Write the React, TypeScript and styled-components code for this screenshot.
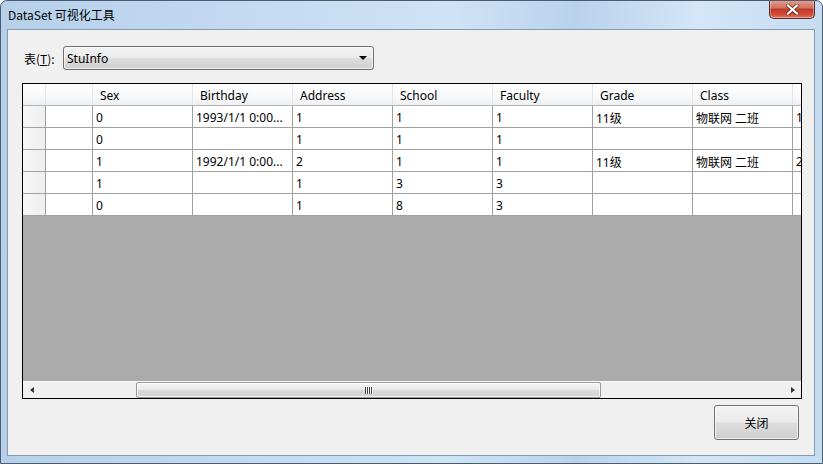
import React from "react";
import styled, { createGlobalStyle } from "styled-components";

const Global = createGlobalStyle`
  html, body { margin: 0; padding: 0; width: 823px; height: 464px; overflow: hidden; background: #fff; }
  * { box-sizing: border-box; }
  body { font-family: "Noto Sans", "Noto Sans CJK SC", sans-serif; font-size: 12px; color: #000; }
`;

const Window = styled.div`
  width: 823px;
  height: 464px;
  display: flex;
  flex-direction: column;
  border: 1px solid #4a5c72;
  border-radius: 7px 7px 0 0;
  background: linear-gradient(90deg, #b7d0ea 0%, #c3daf1 30%, #cfe3f6 55%, #b9d2ec 70%, #d4e6f7 85%, #c5dcf2 100%);
  overflow: hidden;
`;

const TitleBar = styled.div`
  height: 28px;
  display: flex;
  align-items: flex-start;
  padding-left: 7px;
  padding-right: 7px;
`;

const Title = styled.div`
  margin-top: 6px;
  font-family: "Noto Sans CJK SC", sans-serif;
  font-size: 12px;
  line-height: 16px;
  color: #000;
`;

const CloseBtn = styled.div`
  margin-left: auto;
  width: 46px;
  height: 19px;
  margin-top: -1px;
  border: 1px solid #5b2a25;
  border-top: none;
  border-radius: 0 0 5px 5px;
  background: linear-gradient(180deg, #e8a190 0%, #d0705e 45%, #bf3b28 50%, #d14a36 80%, #e07a62 100%);
  display: flex;
  align-items: center;
  justify-content: center;
  box-shadow: inset 0 0 0 1px rgba(255, 255, 255, 0.35);
`;

const Client = styled.div`
  flex: 1;
  margin: 0 7px 7px 6px;
  border: 1px solid #8799ad;
  background: #f0f0f0;
  display: flex;
  flex-direction: column;
  padding: 16px 0 0 14px;
`;

const TopRow = styled.div`
  display: flex;
  align-items: center;
  height: 24px;
`;

const Label = styled.label`
  margin-left: 2px;
  width: 39px;
  font-family: "Noto Sans CJK SC", sans-serif;
  font-size: 12px;
`;

const Combo = styled.div`
  width: 311px;
  height: 24px;
  border: 1px solid #707070;
  border-radius: 3px;
  background: linear-gradient(180deg, #f2f2f2 0%, #ebebeb 48%, #dddddd 52%, #cfcfcf 100%);
  display: flex;
  align-items: center;
  padding: 0 6px 0 3px;
  box-shadow: inset 0 0 0 1px rgba(255, 255, 255, 0.6);
`;

const ComboText = styled.span`
  flex: 1;
  font-size: 12px;
`;

const Arrow = styled.span`
  width: 0;
  height: 0;
  border-left: 4px solid transparent;
  border-right: 4px solid transparent;
  border-top: 4px solid #000;
`;

const Grid = styled.div`
  margin-top: 13px;
  width: 780px;
  height: 316px;
  border: 1px solid #000;
  background: #ababab;
  display: flex;
  flex-direction: column;
  overflow: hidden;
`;

const Row = styled.div<{ $header?: boolean }>`
  display: flex;
  height: 22px;
  flex: none;
  background: ${(p) => (p.$header ? "linear-gradient(180deg, #ffffff 0%, #f7f8fa 60%, #eef0f3 100%)" : "#fff")};
  border-bottom: 1px solid ${(p) => (p.$header ? "#b5b5b5" : "#a0a0a0")};
`;

const RowHead = styled.div<{ $header?: boolean }>`
  width: 23px;
  flex: none;
  background: ${(p) => (p.$header ? "transparent" : "linear-gradient(90deg, #f7f7f7 0%, #eeeeee 100%)")};
  border-right: 1px solid ${(p) => (p.$header ? "#e2e2e2" : "#a0a0a0")};
`;

const Cell = styled.div<{ $w: number; $header?: boolean }>`
  width: ${(p) => p.$w}px;
  flex: none;
  border-right: 1px solid ${(p) => (p.$header ? "#e4e4e4" : "#a0a0a0")};
  padding-left: ${(p) => (p.$header ? 7 : 3)}px;
  padding-top: 2px;
  display: flex;
  align-items: center;
  white-space: nowrap;
  overflow: hidden;
  font-size: 12px;
  color: #000;
`;

const Empty = styled.div`
  flex: 1;
  background: #ababab;
`;

const HScroll = styled.div`
  height: 17px;
  flex: none;
  background: #f0f0f0;
  border-top: 1px solid #fafafa;
  display: flex;
  align-items: center;
`;

const ScrollArrow = styled.div<{ $dir: "left" | "right" }>`
  width: 17px;
  height: 17px;
  display: flex;
  align-items: center;
  justify-content: center;
  &::before {
    content: "";
    width: 0;
    height: 0;
    border-top: 3.5px solid transparent;
    border-bottom: 3.5px solid transparent;
    ${(p) => (p.$dir === "left" ? "border-right: 4px solid #333;" : "border-left: 4px solid #333;")}
  }
`;

const Track = styled.div`
  flex: 1;
  height: 17px;
  display: flex;
  align-items: center;
  padding-left: 96px;
`;

const Thumb = styled.div`
  width: 465px;
  height: 16px;
  border: 1px solid #9a9a9a;
  border-radius: 2px;
  background: linear-gradient(180deg, #f4f4f4 0%, #e8e8e8 50%, #d9d9d9 51%, #d2d2d2 100%);
  display: flex;
  align-items: center;
  justify-content: center;
  box-shadow: inset 0 0 0 1px rgba(255, 255, 255, 0.7);
`;

const Grip = styled.div`
  display: flex;
  gap: 1px;
  span {
    width: 1px;
    height: 7px;
    background: #444;
    box-shadow: 1px 0 0 #fff;
  }
`;

const Footer = styled.div`
  display: flex;
  justify-content: flex-end;
  padding-right: 15px;
  margin-top: 6px;
`;

const Button = styled.button`
  width: 85px;
  height: 35px;
  border: 1px solid #707070;
  border-radius: 3px;
  background: linear-gradient(180deg, #f2f2f2 0%, #ebebeb 48%, #dddddd 52%, #cfcfcf 100%);
  box-shadow: inset 0 0 0 1px rgba(255, 255, 255, 0.7);
  font-family: "Noto Sans CJK SC", sans-serif;
  font-size: 12px;
  color: #000;
  padding: 0;
`;

const widths = [47, 100, 100, 100, 100, 100, 100, 100, 100];
const headers = ["", "Sex", "Birthday", "Address", "School", "Faculty", "Grade", "Class", ""];
const rows = [
  ["", "0", "1993/1/1 0:00...", "1", "1", "1", "11级", "物联网 二班", "1"],
  ["", "0", "", "1", "1", "1", "", "", ""],
  ["", "1", "1992/1/1 0:00...", "2", "1", "1", "11级", "物联网 二班", "2"],
  ["", "1", "", "1", "3", "3", "", "", ""],
  ["", "0", "", "1", "8", "3", "", "", ""],
];

export default function App() {
  return (
    <>
      <Global />
      <Window>
        <TitleBar>
          <Title>DataSet 可视化工具</Title>
          <CloseBtn>
            <svg width="13" height="11" viewBox="0 0 13 11">
              <path d="M2 1.5 L11 9.5 M11 1.5 L2 9.5" stroke="#5a2018" strokeWidth="3.6" strokeLinecap="square" />
              <path d="M2 1.5 L11 9.5 M11 1.5 L2 9.5" stroke="#fff" strokeWidth="2.2" strokeLinecap="square" />
            </svg>
          </CloseBtn>
        </TitleBar>
        <Client>
          <TopRow>
            <Label>表(<u>T</u>):</Label>
            <Combo>
              <ComboText>StuInfo</ComboText>
              <Arrow />
            </Combo>
          </TopRow>
          <Grid>
            <Row $header>
              <RowHead $header />
              {headers.map((h, i) => (
                <Cell key={i} $w={widths[i]} $header>
                  {h}
                </Cell>
              ))}
            </Row>
            {rows.map((r, ri) => (
              <Row key={ri}>
                <RowHead />
                {r.map((c, ci) => (
                  <Cell key={ci} $w={widths[ci]}>
                    {c}
                  </Cell>
                ))}
              </Row>
            ))}
            <Empty />
            <HScroll>
              <ScrollArrow $dir="left" />
              <Track>
                <Thumb>
                  <Grip>
                    <span />
                    <span />
                    <span />
                    <span />
                  </Grip>
                </Thumb>
              </Track>
              <ScrollArrow $dir="right" />
            </HScroll>
          </Grid>
          <Footer>
            <Button>关闭</Button>
          </Footer>
        </Client>
      </Window>
    </>
  );
}
